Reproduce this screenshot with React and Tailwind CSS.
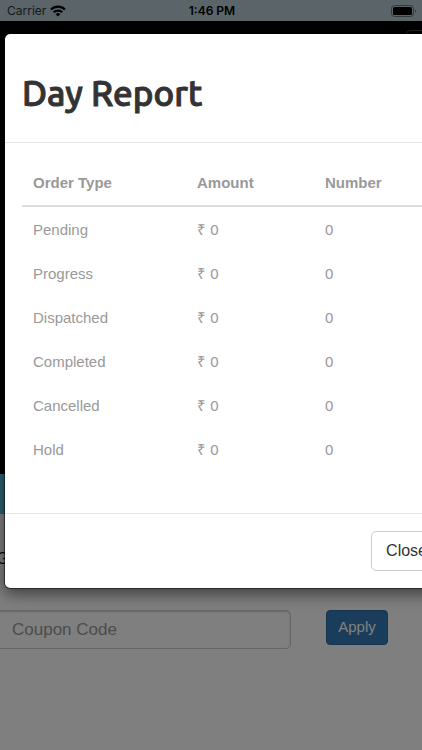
import React from "react";

const rows = ["Pending", "Progress", "Dispatched", "Completed", "Cancelled", "Hold"];

function StatusBar() {
  return (
    <div className="relative z-20 grid h-[21px] grid-cols-3 items-center bg-[#5b6468] pr-[5px] pl-[7px] font-['Inter',sans-serif] text-[12px] leading-[21px] text-black">
      <div className="flex items-center gap-1">
        <span className="text-[#15191b]">Carrier</span>
        <svg className="h-[12px] w-[16px]" viewBox="0 0 16 12" fill="none" stroke="black" strokeWidth="2.2" aria-hidden="true">
          <path d="M1 4.5a10 10 0 0 1 14 0" />
          <path d="M3.7 7.3a6.1 6.1 0 0 1 8.6 0" />
          <path d="M5.7 9.2a3.3 3.3 0 0 1 4.6 0L8 11.6z" fill="black" stroke="none" />
        </svg>
      </div>
      <span className="text-center font-semibold">1:46 PM</span>
      <svg className="h-[12px] w-[26px] justify-self-end" viewBox="0 0 26 12" aria-hidden="true">
        <rect x="0.5" y="0.5" width="22" height="11" rx="3" fill="none" stroke="#33393c" />
        <rect x="2" y="2" width="19" height="8" rx="1.5" fill="black" />
        <path d="M24 4.2c1.3.5 1.3 3.1 0 3.6z" fill="#33393c" />
      </svg>
    </div>
  );
}

function DayReport() {
  return (
    <section
      role="dialog"
      aria-labelledby="report-title"
      className="mt-[33px] ml-1 w-[calc(100%+34px)] rounded-md border border-black/50 bg-white bg-clip-padding shadow-[0_5px_15px_rgba(0,0,0,0.5)]"
    >
      <header className="border-b border-[#e5e5e5] px-[17px] pt-[33px] pb-[23px]">
        <h1 id="report-title" className="font-['Ubuntu','Noto_Sans',sans-serif] text-[35px] leading-[52px] font-medium text-[#333] [-webkit-text-stroke:1px_#333]">
          Day Report
        </h1>
      </header>
      <div className="px-[17px] pt-[18px] pb-[42px]">
        <table className="w-full table-fixed border-separate border-spacing-0 text-left text-[15px] leading-5 text-[#999]">
          <thead>
            <tr className="h-[46px]">
              <th className="w-[164px] border-b-2 border-[#ddd] px-[11px] font-bold">Order Type</th>
              <th className="w-[128px] border-b-2 border-[#ddd] px-[11px] font-bold">Amount</th>
              <th className="border-b-2 border-[#ddd] px-[11px] font-bold">Number</th>
            </tr>
          </thead>
          <tbody>
            {rows.map((name) => (
              <tr key={name} className="h-11">
                <td className="px-[11px] pt-0.5">{name}</td>
                <td className="px-[11px] pt-0.5">₹ 0</td>
                <td className="px-[11px] pt-0.5">0</td>
              </tr>
            ))}
          </tbody>
        </table>
      </div>
      <footer className="flex justify-end border-t border-[#e5e5e5] p-[17px]">
        <button type="button" className="h-10 rounded-[5px] border border-[#ccc] bg-white px-[14px] text-[16px] text-[#333]">
          Close
        </button>
      </footer>
    </section>
  );
}

export default function App() {
  return (
    <div className="relative min-h-screen overflow-hidden bg-white font-['Liberation_Sans',Arial,sans-serif]">
      <StatusBar />
      <nav className="flex h-[453px] items-start justify-end bg-black pt-[9px]">
        <button type="button" aria-label="Open menu" className="-mr-6 h-9 w-10 rounded border border-[#444]" />
      </nav>
      <div className="h-10 bg-[#5bc0de]" />
      <main>
        <h2 className="-ml-1 pt-[35px] text-[17px] leading-5 text-black">G</h2>
        <form className="flex items-start gap-[35px] pt-[41px]">
          <input
            aria-label="Coupon Code"
            placeholder="Coupon Code"
            className="-ml-1 h-[39px] w-[295px] rounded-[5px] border border-[#ccc] bg-white px-[15px] text-[17px] shadow-[inset_0_1px_2px_rgba(0,0,0,0.2)] placeholder:text-[#999]"
          />
          <button type="button" className="h-[35px] w-[62px] rounded border border-[#2e6da4] bg-[#337ab7] text-[15px] text-white">
            Apply
          </button>
        </form>
      </main>
      <div className="absolute inset-0 z-10 bg-black/50">
        <DayReport />
      </div>
    </div>
  );
}
